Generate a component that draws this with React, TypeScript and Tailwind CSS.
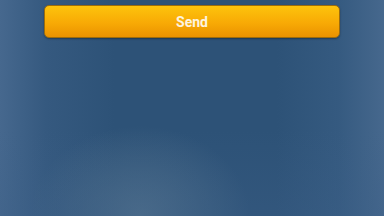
import React from 'react';

export default function App() {
  return (
    <div className="relative h-[216px] w-[384px] overflow-hidden bg-[#2d5277] font-['Roboto',sans-serif]">
      {/* soft background glows */}
      <div className="absolute inset-0 bg-[linear-gradient(90deg,#46688e_0%,#35597f_12%,rgba(45,82,119,0)_30%,rgba(45,82,119,0)_72%,#355a80_88%,#46688d_100%)]" />
      <div className="absolute inset-0 bg-[radial-gradient(ellipse_110px_90px_at_140px_216px,rgba(90,120,145,0.75),rgba(90,120,145,0))]" />
      <div className="absolute inset-0 bg-[linear-gradient(180deg,rgba(30,60,95,0)_60%,rgba(60,95,135,0.35)_100%)]" />

      <div className="relative px-[44px] pt-[5px]">
        <button className="flex h-[33px] w-[296px] items-center justify-center rounded-[5px] border border-[#9c6c0c] bg-[linear-gradient(180deg,#fdc30c_0%,#f8aa05_55%,#ea9200_100%)] pt-px text-[14px] font-bold text-[#fdf4e0] shadow-[0_1px_2px_rgba(0,0,0,0.35)]">
          Send
        </button>
      </div>
    </div>
  );
}
